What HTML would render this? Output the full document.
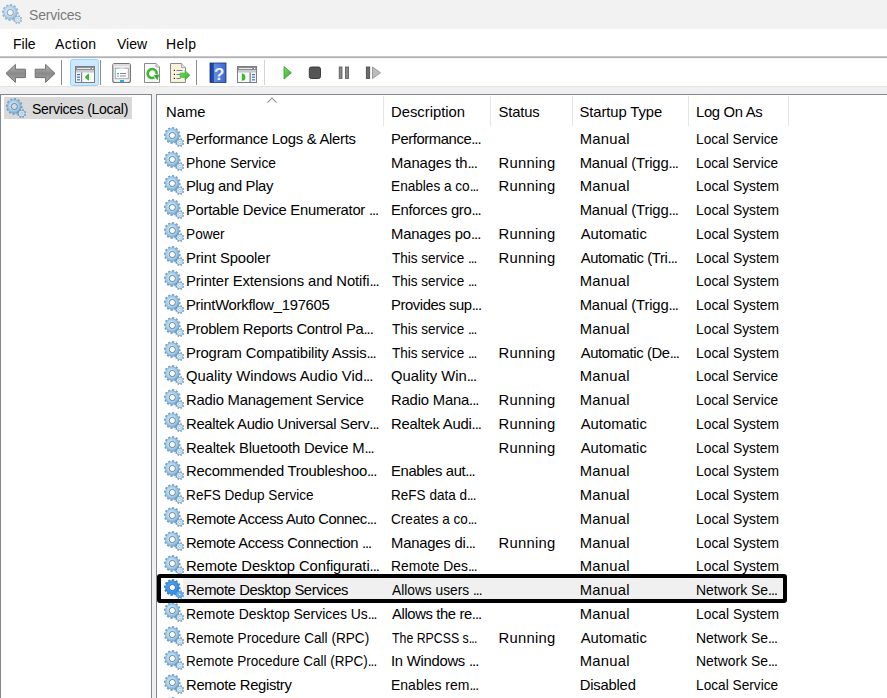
<!DOCTYPE html>
<html><head><meta charset="utf-8">
<style>
*{margin:0;padding:0;box-sizing:border-box}
html,body{width:887px;height:698px;overflow:hidden;background:#fff}
body{position:relative;font-family:"Liberation Sans",sans-serif;font-size:14px;color:#000}
.abs{position:absolute}
#title{position:absolute;left:0;top:0;width:887px;height:29px;background:#f2f2f2}
#title .t{position:absolute;left:29px;top:5px;line-height:20px;font-size:14px;color:#7a7a7a}
#menu{position:absolute;left:0;top:29px;width:887px;height:27px;background:#fff}
#menu span{position:absolute;top:7px;line-height:16px;font-size:14px}
#l1{position:absolute;left:0;top:56px;width:887px;height:1px;background:#c6c6c6}
#l2{position:absolute;left:0;top:57px;width:887px;height:1px;background:#b2b2b2}
#l3{position:absolute;left:0;top:58px;width:887px;height:1px;background:#f2f5fb}
#tb{position:absolute;left:0;top:59px;width:887px;height:27px;background:#fff}
#strip{position:absolute;left:0;top:86px;width:887px;height:8px;background:#f0f0f0;border-top:1px solid #e4e4e4}
#lp{position:absolute;left:0;top:94px;width:152px;height:604px;background:#fff;border-left:1px solid #828790;border-top:1px solid #828790;border-right:1px solid #828790}
#gap{position:absolute;left:152px;top:94px;width:4px;height:604px;background:#f0f0f0}
#rp{position:absolute;left:156px;top:94px;width:731px;height:604px;background:#fff;border-left:1px solid #828790;border-top:1px solid #828790}
.sep{position:absolute;width:1px;background:#a0a0a0}
.hdr{position:absolute;top:102px;line-height:20px;font-size:14.8px}
.hdiv{position:absolute;top:96px;width:1px;height:30px;background:#e5e5e5}
.row{position:absolute;left:0;width:887px;height:23.75px}
.row .c{position:absolute;top:1px;line-height:23.75px;white-space:nowrap;font-size:14.8px}
.row .gi{position:absolute}
.sel{background:linear-gradient(to right,transparent 0,transparent 183px,#f0f0f0 183px,#f0f0f0 783px,transparent 783px)}
i.el{font-style:normal;letter-spacing:-1px}
#box{position:absolute;left:156.5px;top:573.5px;width:630px;height:29.5px;border:4px solid #000;border-radius:3px}
</style></head><body>
<svg width="0" height="0" style="position:absolute">
<defs>
<radialGradient id="gg" cx="0.45" cy="0.45" r="0.6">
<stop offset="0" stop-color="#e8f6fc"/><stop offset="0.5" stop-color="#b4daf0"/><stop offset="1" stop-color="#6f9cc2"/>
</radialGradient>
<radialGradient id="gb" cx="0.45" cy="0.45" r="0.6">
<stop offset="0" stop-color="#6fb4ee"/><stop offset="1" stop-color="#2a7fd0"/>
</radialGradient>
<radialGradient id="gg" cx="0.5" cy="0.5" r="0.5">
<stop offset="0.4" stop-color="#5a7fa8"/><stop offset="0.5" stop-color="#9cc4e0"/><stop offset="0.66" stop-color="#dcf4fc"/><stop offset="0.85" stop-color="#b2d8ee"/><stop offset="1" stop-color="#7aa4ca"/>
</radialGradient>
<radialGradient id="gb" cx="0.5" cy="0.5" r="0.5">
<stop offset="0.4" stop-color="#2f7fd0"/><stop offset="0.65" stop-color="#6ab4f0"/><stop offset="1" stop-color="#3a8ad8"/>
</radialGradient>
<g id="g">
<path d="M7.18 1.69 L7.87 1.61 L7.99 0.11 L10.26 0.33 L10.09 1.84 L10.74 2.05 L11.37 2.32 L12.23 1.08 L14.08 2.41 L13.18 3.62 L13.64 4.13 L14.05 4.68 L15.42 4.04 L16.35 6.11 L14.96 6.71 L15.11 7.38 L15.19 8.07 L16.69 8.19 L16.47 10.46 L14.96 10.29 L14.75 10.94 L14.48 11.57 L15.72 12.43 L14.39 14.28 L13.18 13.38 L12.67 13.84 L12.12 14.25 L12.76 15.62 L10.69 16.55 L10.09 15.16 L9.42 15.31 L8.73 15.39 L8.61 16.89 L6.34 16.67 L6.51 15.16 L5.86 14.95 L5.23 14.68 L4.37 15.92 L2.52 14.59 L3.42 13.38 L2.96 12.87 L2.55 12.32 L1.18 12.96 L0.25 10.89 L1.64 10.29 L1.49 9.62 L1.41 8.93 L-0.09 8.81 L0.13 6.54 L1.64 6.71 L1.85 6.06 L2.12 5.43 L0.88 4.57 L2.21 2.72 L3.42 3.62 L3.93 3.16 L4.48 2.75 L3.84 1.38 L5.91 0.45 L6.51 1.84 Z M5.50 8.50 a2.8 2.8 0 1 0 5.6 0 a2.8 2.8 0 1 0 -5.6 0 Z" fill="#76a0c8" fill-rule="evenodd"/>
<path d="M1.4 8.5 a6.9 6.9 0 1 0 13.8 0 a6.9 6.9 0 1 0 -13.8 0 Z M5.50 8.50 a2.8 2.8 0 1 0 5.6 0 a2.8 2.8 0 1 0 -5.6 0 Z" fill="url(#gg)" fill-rule="evenodd"/>
<circle cx="8.3" cy="8.5" r="3.1" fill="none" stroke="#56799f" stroke-width="0.8"/>
<path d="M19.10 15.50 L19.05 16.10 L20.10 16.46 L19.49 17.93 L18.49 17.44 L18.10 17.90 L17.64 18.29 L18.13 19.29 L16.66 19.90 L16.30 18.85 L15.70 18.90 L15.10 18.85 L14.74 19.90 L13.27 19.29 L13.76 18.29 L13.30 17.90 L12.91 17.44 L11.91 17.93 L11.30 16.46 L12.35 16.10 L12.30 15.50 L12.35 14.90 L11.30 14.54 L11.91 13.07 L12.91 13.56 L13.30 13.10 L13.76 12.71 L13.27 11.71 L14.74 11.10 L15.10 12.15 L15.70 12.10 L16.30 12.15 L16.66 11.10 L18.13 11.71 L17.64 12.71 L18.10 13.10 L18.49 13.56 L19.49 13.07 L20.10 14.54 L19.05 14.90 Z M14.70 15.50 a1.0 1.0 0 1 0 2.0 0 a1.0 1.0 0 1 0 -2.0 0 Z" fill="#6a90b8" fill-rule="evenodd"/>
<path d="M12.7 15.5 a3.0 3.0 0 1 0 6.0 0 a3.0 3.0 0 1 0 -6.0 0 Z M14.70 15.50 a1.0 1.0 0 1 0 2.0 0 a1.0 1.0 0 1 0 -2.0 0 Z" fill="#c2e0f0" fill-rule="evenodd"/>
</g><g id="gsel">
<path d="M7.18 1.69 L7.87 1.61 L7.99 0.11 L10.26 0.33 L10.09 1.84 L10.74 2.05 L11.37 2.32 L12.23 1.08 L14.08 2.41 L13.18 3.62 L13.64 4.13 L14.05 4.68 L15.42 4.04 L16.35 6.11 L14.96 6.71 L15.11 7.38 L15.19 8.07 L16.69 8.19 L16.47 10.46 L14.96 10.29 L14.75 10.94 L14.48 11.57 L15.72 12.43 L14.39 14.28 L13.18 13.38 L12.67 13.84 L12.12 14.25 L12.76 15.62 L10.69 16.55 L10.09 15.16 L9.42 15.31 L8.73 15.39 L8.61 16.89 L6.34 16.67 L6.51 15.16 L5.86 14.95 L5.23 14.68 L4.37 15.92 L2.52 14.59 L3.42 13.38 L2.96 12.87 L2.55 12.32 L1.18 12.96 L0.25 10.89 L1.64 10.29 L1.49 9.62 L1.41 8.93 L-0.09 8.81 L0.13 6.54 L1.64 6.71 L1.85 6.06 L2.12 5.43 L0.88 4.57 L2.21 2.72 L3.42 3.62 L3.93 3.16 L4.48 2.75 L3.84 1.38 L5.91 0.45 L6.51 1.84 Z M5.50 8.50 a2.8 2.8 0 1 0 5.6 0 a2.8 2.8 0 1 0 -5.6 0 Z" fill="#3d8ad6" fill-rule="evenodd"/>
<path d="M1.4 8.5 a6.9 6.9 0 1 0 13.8 0 a6.9 6.9 0 1 0 -13.8 0 Z M5.50 8.50 a2.8 2.8 0 1 0 5.6 0 a2.8 2.8 0 1 0 -5.6 0 Z" fill="url(#gb)" fill-rule="evenodd"/>
<circle cx="8.3" cy="8.5" r="3.1" fill="none" stroke="#2f78c8" stroke-width="0.8"/>
<path d="M19.10 15.50 L19.05 16.10 L20.10 16.46 L19.49 17.93 L18.49 17.44 L18.10 17.90 L17.64 18.29 L18.13 19.29 L16.66 19.90 L16.30 18.85 L15.70 18.90 L15.10 18.85 L14.74 19.90 L13.27 19.29 L13.76 18.29 L13.30 17.90 L12.91 17.44 L11.91 17.93 L11.30 16.46 L12.35 16.10 L12.30 15.50 L12.35 14.90 L11.30 14.54 L11.91 13.07 L12.91 13.56 L13.30 13.10 L13.76 12.71 L13.27 11.71 L14.74 11.10 L15.10 12.15 L15.70 12.10 L16.30 12.15 L16.66 11.10 L18.13 11.71 L17.64 12.71 L18.10 13.10 L18.49 13.56 L19.49 13.07 L20.10 14.54 L19.05 14.90 Z M14.70 15.50 a1.0 1.0 0 1 0 2.0 0 a1.0 1.0 0 1 0 -2.0 0 Z" fill="#4a96dc" fill-rule="evenodd"/>
<path d="M12.7 15.5 a3.0 3.0 0 1 0 6.0 0 a3.0 3.0 0 1 0 -6.0 0 Z M14.70 15.50 a1.0 1.0 0 1 0 2.0 0 a1.0 1.0 0 1 0 -2.0 0 Z" fill="#69aee8" fill-rule="evenodd"/>
</g>
</defs></svg>

<div id="title">
<svg class="abs" style="left:2px;top:4px;opacity:0.75" width="22" height="22"><use href="#g"/></svg>
<span class="t" style="letter-spacing:-0.2px">Services</span>
</div>
<div id="menu">
<span style="left:13px">File</span>
<span style="left:55px;letter-spacing:0.45px">Action</span>
<span style="left:117px">View</span>
<span style="left:166px;letter-spacing:0.4px">Help</span>
</div>
<div id="l1"></div><div id="l2"></div><div id="l3"></div>
<div id="tb"></div>
<svg class="abs" style="left:0;top:0" width="887" height="94" viewBox="0 0 887 94">
<defs>
<linearGradient id="ag" x1="0" y1="0" x2="0" y2="1"><stop offset="0" stop-color="#b8b8b8"/><stop offset="0.5" stop-color="#8a8a8a"/><stop offset="1" stop-color="#a8a8a8"/></linearGradient>
<linearGradient id="grn" x1="0" y1="0" x2="1" y2="1"><stop offset="0" stop-color="#7fe06a"/><stop offset="1" stop-color="#2fa824"/></linearGradient>
<linearGradient id="hlp" x1="0" y1="0" x2="1" y2="0"><stop offset="0" stop-color="#1c3c9c"/><stop offset="0.25" stop-color="#2a50b8"/><stop offset="0.28" stop-color="#5f8ee0"/><stop offset="1" stop-color="#3d68cc"/></linearGradient>
</defs>
<!-- back arrow -->
<path d="M6 73.4 L15.4 64.4 L15.4 69.2 L25.4 69.2 L25.4 77.6 L15.4 77.6 L15.4 82.4 Z" fill="url(#ag)" stroke="#6e6e6e" stroke-width="1" stroke-linejoin="round"/>
<!-- forward arrow -->
<path d="M55 73.4 L45.6 64.4 L45.6 69.2 L35.2 69.2 L35.2 77.6 L45.6 77.6 L45.6 82.4 Z" fill="url(#ag)" stroke="#6e6e6e" stroke-width="1" stroke-linejoin="round"/>
<rect x="61" y="60" width="1" height="25" fill="#8c8c8c"/>
<!-- highlighted button -->
<rect x="70.5" y="59.5" width="28" height="26" rx="2" fill="#cce8ff" stroke="#99d1ff" stroke-width="1"/>
<!-- show/hide console tree icon -->
<rect x="75.5" y="66.5" width="19" height="16" fill="#f2f2f2" stroke="#7d7d7d"/>
<rect x="76" y="67" width="18" height="3" fill="#8a8f98"/>
<rect x="77" y="68" width="13" height="1" fill="#e8e8e8"/>
<rect x="76" y="70" width="18" height="2.5" fill="#c8cacd"/>
<rect x="81" y="72.5" width="1.3" height="10" fill="#7d8590"/>
<rect x="77" y="74" width="3" height="1.2" fill="#3b78c8"/>
<rect x="77" y="76.6" width="3" height="1.2" fill="#3b78c8"/>
<rect x="77" y="79.2" width="3" height="1.2" fill="#3b78c8"/>
<rect x="82.5" y="73" width="11.5" height="9" fill="#fafafa"/>
<path d="M84.8 77.2 Q86.5 74.6 89 73.6 L89 80.8 Q86.5 79.8 84.8 77.2 Z" fill="#3cb832"/><rect x="89" y="68" width="1.2" height="1" fill="#fff"/><rect x="92" y="68" width="1.2" height="1" fill="#fff"/>
<rect x="100" y="60" width="1" height="25" fill="#8c8c8c"/>
<!-- properties icon -->
<rect x="112.8" y="63.5" width="17.6" height="19" rx="2" fill="#f0f0f0" stroke="#767676" stroke-width="1.2"/>
<rect x="113.3" y="64" width="16.6" height="2" fill="#dcdcdc"/>
<rect x="115.3" y="68.2" width="13" height="10.5" fill="#ffffff" stroke="#9aa0aa" stroke-width="0.9"/>
<rect x="119.5" y="67" width="5" height="2" fill="#e0e0e0"/>
<rect x="117" y="73" width="2" height="1.3" fill="#22aaee"/>
<rect x="120" y="73" width="6" height="1" fill="#8a8a8a"/>
<rect x="117" y="75.5" width="2" height="1.3" fill="#b0b0b0"/>
<rect x="120" y="75.5" width="6" height="1" fill="#8a8a8a"/>
<rect x="120" y="80" width="4" height="2" fill="#22b0f0"/>
<!-- refresh icon -->
<path d="M144.5 63.5 L156 63.5 L159.5 67 L159.5 82.5 L144.5 82.5 Z" fill="#fafafa" stroke="#8a8a8a" stroke-width="1"/>
<path d="M156 63.5 L156 67 L159.5 67" fill="#e4e4e4" stroke="#a0a0a0" stroke-width="0.8"/>
<path d="M154.45 77.40 A4.5 4.5 0 1 1 156.63 74.28" fill="none" stroke="#3cb830" stroke-width="2.6"/>
<path d="M153.8 75.2 L159.2 74.6 L157.4 80.2 Z" fill="#30a828"/>
<!-- export icon -->
<path d="M170.5 63.5 L181.5 63.5 L185.5 67.5 L185.5 82.5 L170.5 82.5 Z" fill="#f8f2d8" stroke="#8a8a8a" stroke-width="1"/>
<path d="M181.5 63.5 L181.5 67.5 L185.5 67.5" fill="#e4e4e4" stroke="#9a9a9a" stroke-width="0.8"/>
<rect x="173.8" y="69.8" width="1.2" height="1.2" fill="#222"/><rect x="176.5" y="70" width="6" height="1" fill="#7a78b8"/>
<rect x="173.8" y="73.8" width="1.2" height="1.2" fill="#222"/><rect x="176.5" y="74" width="4" height="1" fill="#7a78b8"/>
<rect x="173.8" y="77.8" width="1.2" height="1.2" fill="#222"/><rect x="176.5" y="78" width="4" height="1" fill="#7a78b8"/>
<path d="M180 73 L185 73 L185 70.5 L190 75.2 L185 80 L185 77.5 L180 77.5 Z" fill="url(#grn)" stroke="#3aa830" stroke-width="0.5"/>
<rect x="196" y="60" width="1" height="25" fill="#8c8c8c"/>
<!-- help icon -->
<rect x="210" y="63" width="16" height="19.5" fill="url(#hlp)"/>
<rect x="210" y="63" width="16" height="19.5" fill="none" stroke="#1a2f80" stroke-width="0.8"/>
<text x="219.2" y="79.5" font-family="Liberation Sans" font-size="17" font-weight="bold" fill="#eef0f6" text-anchor="middle">?</text>
<!-- action pane icon -->
<rect x="237.5" y="66.5" width="19" height="16" fill="#f2f2f2" stroke="#7d7d7d"/>
<rect x="238" y="67" width="18" height="3" fill="#8a8f98"/>
<rect x="239" y="68" width="12" height="1" fill="#e8e8e8"/>
<rect x="238" y="70" width="18" height="2.5" fill="#c8cacd"/>
<rect x="238" y="73" width="11.5" height="9" fill="#fafafa"/>
<rect x="249.5" y="72.5" width="1.3" height="10" fill="#7d8590"/>
<rect x="252" y="74" width="3" height="1.2" fill="#3b78c8"/>
<rect x="252" y="76.6" width="3" height="1.2" fill="#3b78c8"/>
<rect x="252" y="79.2" width="3" height="1.2" fill="#3b78c8"/>
<path d="M241.8 73.6 A3.6 3.6 0 0 1 241.8 80.8 Z" fill="#3cb832"/><rect x="251" y="68" width="1.2" height="1" fill="#fff"/><rect x="254" y="68" width="1.2" height="1" fill="#fff"/>
<rect x="264" y="60" width="1" height="25" fill="#d4d4d4"/>
<!-- play -->
<path d="M284 66.6 L291.3 72.8 L284 79 Z" fill="url(#grn)" stroke="#2f9a26" stroke-width="0.8" stroke-linejoin="round"/>
<!-- stop -->
<rect x="309.3" y="67" width="11.2" height="11.5" rx="2" fill="#555" stroke="#333" stroke-width="0.9"/>
<!-- pause -->
<rect x="339.2" y="67" width="2.8" height="11.5" fill="#8a8a8a" stroke="#555" stroke-width="0.8"/>
<rect x="345.4" y="67" width="3.2" height="11.5" fill="#8a8a8a" stroke="#555" stroke-width="0.8"/>
<!-- resume -->
<rect x="366.3" y="67" width="3.4" height="11.5" fill="#6a6a6a" stroke="#444" stroke-width="0.8"/>
<path d="M372.5 67 L380.5 72.8 L372.5 78.6 Z" fill="#bcbcbc" stroke="#8a8a8a" stroke-width="0.8" stroke-linejoin="round"/>
</svg>
<div id="strip"></div>
<div id="lp"></div>
<div id="gap"></div>
<div id="rp"></div>
<div class="abs" style="left:4px;top:97px;width:128px;height:22px;background:#d9d9d9"></div>
<svg class="abs" style="left:6px;top:98px" width="22" height="22"><use href="#g"/></svg>
<span class="abs" style="left:32px;top:98.5px;line-height:20px;letter-spacing:-0.27px">Services (Local)</span>

<span class="hdr" style="left:166px">Name</span>
<span class="hdr" style="left:391px">Description</span>
<span class="hdr" style="left:498.5px;letter-spacing:-0.15px">Status</span>
<span class="hdr" style="left:579.6px;letter-spacing:-0.1px">Startup Type</span>
<span class="hdr" style="left:696px;letter-spacing:-0.3px">Log On As</span>
<div class="hdiv" style="left:383px"></div>
<div class="hdiv" style="left:490px"></div>
<div class="hdiv" style="left:572px"></div>
<div class="hdiv" style="left:688px"></div>
<div class="hdiv" style="left:788px"></div>
<svg class="abs" style="left:266px;top:96px" width="12" height="8"><path d="M1.5 6.5 L6 2 L10.5 6.5" fill="none" stroke="#999" stroke-width="1.1"/></svg>

<div class="row" style="top:126.90px"><svg class="gi" style="left:164px;top:0.4px" width="21" height="21"><use href="#g"/></svg><span class="c c0" style="left:186.00px;letter-spacing:-0.250px">Performance Logs &amp; Alerts</span><span class="c c1" style="left:391.00px;letter-spacing:-0.409px">Performance<i class="el">...</i></span><span class="c c3" style="left:579.70px;letter-spacing:0.260px">Manual</span><span class="c c4" style="left:696.00px;transform:scaleX(0.9241);transform-origin:1.00px 0">Local Service</span></div>
<div class="row" style="top:150.65px"><svg class="gi" style="left:164px;top:0.4px" width="21" height="21"><use href="#g"/></svg><span class="c c0" style="left:186.00px;transform:scaleX(0.9347);transform-origin:1.00px 0">Phone Service</span><span class="c c1" style="left:391.00px;letter-spacing:-0.090px">Manages th<i class="el">...</i></span><span class="c c2" style="left:498.60px;letter-spacing:0.267px">Running</span><span class="c c3" style="left:579.70px;letter-spacing:-0.146px">Manual (Trigg<i class="el">...</i></span><span class="c c4" style="left:696.00px;transform:scaleX(0.9241);transform-origin:1.00px 0">Local Service</span></div>
<div class="row" style="top:174.40px"><svg class="gi" style="left:164px;top:0.4px" width="21" height="21"><use href="#g"/></svg><span class="c c0" style="left:186.00px;letter-spacing:-0.325px">Plug and Play</span><span class="c c1" style="left:391.00px;transform:scaleX(0.9181);transform-origin:1.00px 0">Enables a co<i class="el">...</i></span><span class="c c2" style="left:498.60px;letter-spacing:0.267px">Running</span><span class="c c3" style="left:579.70px;letter-spacing:0.260px">Manual</span><span class="c c4" style="left:696.00px;transform:scaleX(0.9345);transform-origin:1.00px 0">Local System</span></div>
<div class="row" style="top:198.15px"><svg class="gi" style="left:164px;top:0.4px" width="21" height="21"><use href="#g"/></svg><span class="c c0" style="left:186.00px;letter-spacing:-0.263px">Portable Device Enumerator <i class="el">...</i></span><span class="c c1" style="left:391.00px;letter-spacing:-0.292px">Enforces gro<i class="el">...</i></span><span class="c c3" style="left:579.70px;letter-spacing:-0.146px">Manual (Trigg<i class="el">...</i></span><span class="c c4" style="left:696.00px;transform:scaleX(0.9345);transform-origin:1.00px 0">Local System</span></div>
<div class="row" style="top:221.90px"><svg class="gi" style="left:164px;top:0.4px" width="21" height="21"><use href="#g"/></svg><span class="c c0" style="left:186.00px;transform:scaleX(0.9195);transform-origin:1.00px 0">Power</span><span class="c c1" style="left:391.00px;letter-spacing:-0.150px">Manages po<i class="el">...</i></span><span class="c c2" style="left:498.60px;letter-spacing:0.267px">Running</span><span class="c c3" style="left:580.70px;letter-spacing:0.037px">Automatic</span><span class="c c4" style="left:696.00px;transform:scaleX(0.9345);transform-origin:1.00px 0">Local System</span></div>
<div class="row" style="top:245.65px"><svg class="gi" style="left:164px;top:0.4px" width="21" height="21"><use href="#g"/></svg><span class="c c0" style="left:186.00px;letter-spacing:-0.100px">Print Spooler</span><span class="c c1" style="left:392.00px;transform:scaleX(0.9141);transform-origin:0.00px 0">This service <i class="el">...</i></span><span class="c c2" style="left:498.60px;letter-spacing:0.267px">Running</span><span class="c c3" style="left:580.70px;letter-spacing:-0.336px">Automatic (Tri<i class="el">...</i></span><span class="c c4" style="left:696.00px;transform:scaleX(0.9345);transform-origin:1.00px 0">Local System</span></div>
<div class="row" style="top:269.40px"><svg class="gi" style="left:164px;top:0.4px" width="21" height="21"><use href="#g"/></svg><span class="c c0" style="left:186.00px;letter-spacing:-0.114px">Printer Extensions and Notifi<i class="el">...</i></span><span class="c c1" style="left:392.00px;transform:scaleX(0.9141);transform-origin:0.00px 0">This service <i class="el">...</i></span><span class="c c3" style="left:579.70px;letter-spacing:0.260px">Manual</span><span class="c c4" style="left:696.00px;transform:scaleX(0.9345);transform-origin:1.00px 0">Local System</span></div>
<div class="row" style="top:293.15px"><svg class="gi" style="left:164px;top:0.4px" width="21" height="21"><use href="#g"/></svg><span class="c c0" style="left:186.00px;letter-spacing:-0.253px">PrintWorkflow_197605</span><span class="c c1" style="left:391.00px;letter-spacing:-0.408px">Provides sup<i class="el">...</i></span><span class="c c3" style="left:579.70px;letter-spacing:-0.146px">Manual (Trigg<i class="el">...</i></span><span class="c c4" style="left:696.00px;transform:scaleX(0.9345);transform-origin:1.00px 0">Local System</span></div>
<div class="row" style="top:316.90px"><svg class="gi" style="left:164px;top:0.4px" width="21" height="21"><use href="#g"/></svg><span class="c c0" style="left:186.00px;letter-spacing:-0.292px">Problem Reports Control Pa<i class="el">...</i></span><span class="c c1" style="left:392.00px;transform:scaleX(0.9141);transform-origin:0.00px 0">This service <i class="el">...</i></span><span class="c c3" style="left:579.70px;letter-spacing:0.260px">Manual</span><span class="c c4" style="left:696.00px;transform:scaleX(0.9345);transform-origin:1.00px 0">Local System</span></div>
<div class="row" style="top:340.65px"><svg class="gi" style="left:164px;top:0.4px" width="21" height="21"><use href="#g"/></svg><span class="c c0" style="left:186.00px;letter-spacing:-0.141px">Program Compatibility Assis<i class="el">...</i></span><span class="c c1" style="left:392.00px;transform:scaleX(0.9141);transform-origin:0.00px 0">This service <i class="el">...</i></span><span class="c c2" style="left:498.60px;letter-spacing:0.267px">Running</span><span class="c c3" style="left:580.70px;letter-spacing:-0.369px">Automatic (De<i class="el">...</i></span><span class="c c4" style="left:696.00px;transform:scaleX(0.9345);transform-origin:1.00px 0">Local System</span></div>
<div class="row" style="top:364.40px"><svg class="gi" style="left:164px;top:0.4px" width="21" height="21"><use href="#g"/></svg><span class="c c0" style="left:186.00px;letter-spacing:0.016px">Quality Windows Audio Vid<i class="el">...</i></span><span class="c c1" style="left:391.00px;letter-spacing:0.009px">Quality Win<i class="el">...</i></span><span class="c c3" style="left:579.70px;letter-spacing:0.260px">Manual</span><span class="c c4" style="left:696.00px;transform:scaleX(0.9241);transform-origin:1.00px 0">Local Service</span></div>
<div class="row" style="top:388.15px"><svg class="gi" style="left:164px;top:0.4px" width="21" height="21"><use href="#g"/></svg><span class="c c0" style="left:186.00px;letter-spacing:-0.200px">Radio Management Service</span><span class="c c1" style="left:391.00px;letter-spacing:-0.170px">Radio Mana<i class="el">...</i></span><span class="c c2" style="left:498.60px;letter-spacing:0.267px">Running</span><span class="c c3" style="left:579.70px;letter-spacing:0.260px">Manual</span><span class="c c4" style="left:696.00px;transform:scaleX(0.9241);transform-origin:1.00px 0">Local Service</span></div>
<div class="row" style="top:411.90px"><svg class="gi" style="left:164px;top:0.4px" width="21" height="21"><use href="#g"/></svg><span class="c c0" style="left:186.00px;letter-spacing:-0.296px">Realtek Audio Universal Serv<i class="el">...</i></span><span class="c c1" style="left:391.00px;letter-spacing:-0.208px">Realtek Audi<i class="el">...</i></span><span class="c c2" style="left:498.60px;letter-spacing:0.267px">Running</span><span class="c c3" style="left:580.70px;letter-spacing:0.037px">Automatic</span><span class="c c4" style="left:696.00px;transform:scaleX(0.9345);transform-origin:1.00px 0">Local System</span></div>
<div class="row" style="top:435.65px"><svg class="gi" style="left:164px;top:0.4px" width="21" height="21"><use href="#g"/></svg><span class="c c0" style="left:186.00px;letter-spacing:-0.162px">Realtek Bluetooth Device M<i class="el">...</i></span><span class="c c2" style="left:498.60px;letter-spacing:0.267px">Running</span><span class="c c3" style="left:580.70px;letter-spacing:0.037px">Automatic</span><span class="c c4" style="left:696.00px;transform:scaleX(0.9345);transform-origin:1.00px 0">Local System</span></div>
<div class="row" style="top:459.40px"><svg class="gi" style="left:164px;top:0.4px" width="21" height="21"><use href="#g"/></svg><span class="c c0" style="left:186.00px;letter-spacing:-0.217px">Recommended Troubleshoo<i class="el">...</i></span><span class="c c1" style="left:391.00px;letter-spacing:-0.345px">Enables aut<i class="el">...</i></span><span class="c c3" style="left:579.70px;letter-spacing:0.260px">Manual</span><span class="c c4" style="left:696.00px;transform:scaleX(0.9345);transform-origin:1.00px 0">Local System</span></div>
<div class="row" style="top:483.15px"><svg class="gi" style="left:164px;top:0.4px" width="21" height="21"><use href="#g"/></svg><span class="c c0" style="left:186.00px;transform:scaleX(0.9174);transform-origin:1.00px 0">ReFS Dedup Service</span><span class="c c1" style="left:391.00px;transform:scaleX(0.9132);transform-origin:1.00px 0">ReFS data d<i class="el">...</i></span><span class="c c3" style="left:579.70px;letter-spacing:0.260px">Manual</span><span class="c c4" style="left:696.00px;transform:scaleX(0.9345);transform-origin:1.00px 0">Local System</span></div>
<div class="row" style="top:506.90px"><svg class="gi" style="left:164px;top:0.4px" width="21" height="21"><use href="#g"/></svg><span class="c c0" style="left:186.00px;letter-spacing:-0.440px">Remote Access Auto Connec<i class="el">...</i></span><span class="c c1" style="left:391.00px;transform:scaleX(0.9141);transform-origin:1.00px 0">Creates a co<i class="el">...</i></span><span class="c c3" style="left:579.70px;letter-spacing:0.260px">Manual</span><span class="c c4" style="left:696.00px;transform:scaleX(0.9345);transform-origin:1.00px 0">Local System</span></div>
<div class="row" style="top:530.65px"><svg class="gi" style="left:164px;top:0.4px" width="21" height="21"><use href="#g"/></svg><span class="c c0" style="left:186.00px;letter-spacing:-0.400px">Remote Access Connection <i class="el">...</i></span><span class="c c1" style="left:391.00px;letter-spacing:-0.190px">Manages di<i class="el">...</i></span><span class="c c2" style="left:498.60px;letter-spacing:0.267px">Running</span><span class="c c3" style="left:579.70px;letter-spacing:0.260px">Manual</span><span class="c c4" style="left:696.00px;transform:scaleX(0.9345);transform-origin:1.00px 0">Local System</span></div>
<div class="row" style="top:554.40px"><svg class="gi" style="left:164px;top:0.4px" width="21" height="21"><use href="#g"/></svg><span class="c c0" style="left:186.00px;letter-spacing:-0.088px">Remote Desktop Configurati<i class="el">...</i></span><span class="c c1" style="left:391.00px;transform:scaleX(0.9344);transform-origin:1.00px 0">Remote Des<i class="el">...</i></span><span class="c c3" style="left:579.70px;letter-spacing:0.260px">Manual</span><span class="c c4" style="left:696.00px;transform:scaleX(0.9345);transform-origin:1.00px 0">Local System</span></div>
<div class="row sel" style="top:578.15px"><svg class="gi" style="left:164px;top:0.4px" width="21" height="21"><use href="#gsel"/></svg><span class="c c0" style="left:186.00px;letter-spacing:-0.395px">Remote Desktop Services</span><span class="c c1" style="left:392.00px;transform:scaleX(0.9281);transform-origin:0.00px 0">Allows users <i class="el">...</i></span><span class="c c3" style="left:579.70px;letter-spacing:0.260px">Manual</span><span class="c c4" style="left:696.00px;transform:scaleX(0.9412);transform-origin:1.00px 0">Network Se<i class="el">...</i></span></div>
<div class="row" style="top:601.90px"><svg class="gi" style="left:164px;top:0.4px" width="21" height="21"><use href="#g"/></svg><span class="c c0" style="left:186.00px;transform:scaleX(0.9403);transform-origin:1.00px 0">Remote Desktop Services Us<i class="el">...</i></span><span class="c c1" style="left:392.00px;letter-spacing:-0.377px">Allows the re<i class="el">...</i></span><span class="c c3" style="left:579.70px;letter-spacing:0.260px">Manual</span><span class="c c4" style="left:696.00px;transform:scaleX(0.9345);transform-origin:1.00px 0">Local System</span></div>
<div class="row" style="top:625.65px"><svg class="gi" style="left:164px;top:0.4px" width="21" height="21"><use href="#g"/></svg><span class="c c0" style="left:186.00px;transform:scaleX(0.9203);transform-origin:1.00px 0">Remote Procedure Call (RPC)</span><span class="c c1" style="left:392.00px;transform:scaleX(0.8327);transform-origin:0.00px 0">The RPCSS s<i class="el">...</i></span><span class="c c2" style="left:498.60px;letter-spacing:0.267px">Running</span><span class="c c3" style="left:580.70px;letter-spacing:0.037px">Automatic</span><span class="c c4" style="left:696.00px;transform:scaleX(0.9412);transform-origin:1.00px 0">Network Se<i class="el">...</i></span></div>
<div class="row" style="top:649.40px"><svg class="gi" style="left:164px;top:0.4px" width="21" height="21"><use href="#g"/></svg><span class="c c0" style="left:186.00px;transform:scaleX(0.9130);transform-origin:1.00px 0">Remote Procedure Call (RPC)<i class="el">...</i></span><span class="c c1" style="left:391.00px;letter-spacing:-0.245px">In Windows <i class="el">...</i></span><span class="c c3" style="left:579.70px;letter-spacing:0.260px">Manual</span><span class="c c4" style="left:696.00px;transform:scaleX(0.9412);transform-origin:1.00px 0">Network Se<i class="el">...</i></span></div>
<div class="row" style="top:673.15px"><svg class="gi" style="left:164px;top:0.4px" width="21" height="21"><use href="#g"/></svg><span class="c c0" style="left:186.00px;letter-spacing:-0.307px">Remote Registry</span><span class="c c1" style="left:391.00px;transform:scaleX(0.9429);transform-origin:1.00px 0">Enables rem<i class="el">...</i></span><span class="c c3" style="left:579.70px;letter-spacing:-0.200px">Disabled</span><span class="c c4" style="left:696.00px;transform:scaleX(0.9241);transform-origin:1.00px 0">Local Service</span></div>
<div class="row" style="top:696.90px"><svg class="gi" style="left:164px;top:0.4px" width="21" height="21"><use href="#g"/></svg><span class="c c0" style="left:186px">Retail Demo Service</span><span class="c c1" style="left:391px">The Retail D<i class="el">...</i></span><span class="c c3" style="left:580px">Manual</span><span class="c c4" style="left:696px">Local System</span></div>
<div id="box"></div>
</body></html>
